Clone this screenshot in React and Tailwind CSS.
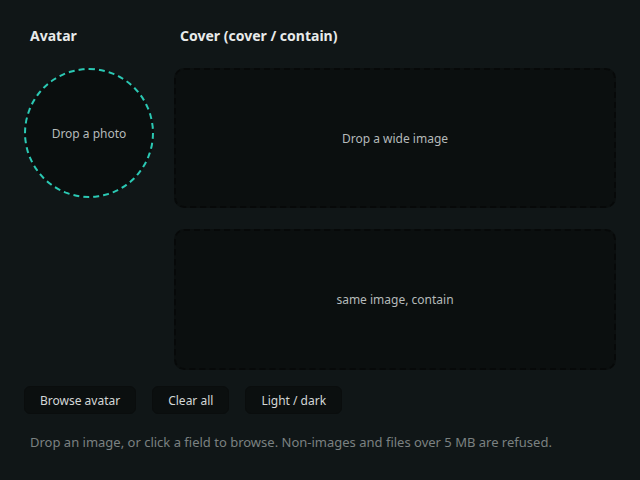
import React from "react";

const Button = ({ children }) => (
  <button className="h-7 px-[15px] pt-px rounded-md bg-[#0b0f0f] border border-[#0a0d0d] text-[12px] text-[#d3d7d7]">
    {children}
  </button>
);

const DropBox = ({ label, className }) => (
  <div
    className={`flex items-center justify-center rounded-[10px] border-2 border-dashed border-[#070909] bg-[#0b0f0f] text-[12px] text-[#b5baba] ${className}`}
  >
    {label}
  </div>
);

export default function App() {
  return (
    <div
      className="min-h-screen bg-[#101617] px-6 pt-[26px]"
      style={{ fontFamily: '"Noto Sans", "Open Sans", sans-serif' }}
    >
      <div className="flex gap-5">
        <div className="w-[130px]">
          <h2 className="pl-1.5 text-sm font-bold leading-5 text-[#e8eaea]">Avatar</h2>
          <div className="mt-[22px] w-[130px] h-[130px] pt-0.5 rounded-full border-2 border-dashed border-[#2bc9b4] bg-[#0a0e0e] flex items-center justify-center text-[12px] text-[#b5baba]">
            Drop a photo
          </div>
        </div>
        <div className="flex-1">
          <h2 className="pl-1.5 text-sm font-bold leading-5 text-[#e8eaea]">
            Cover (cover / contain)
          </h2>
          <DropBox label="Drop a wide image" className="mt-[22px] h-[140px] pt-0.5" />
          <DropBox label="same image, contain" className="mt-[21px] h-[141px]" />
        </div>
      </div>

      <div className="mt-4 flex gap-4">
        <Button>Browse avatar</Button>
        <Button>Clear all</Button>
        <Button>Light / dark</Button>
      </div>

      <p className="mt-[18px] pl-1.5 text-[13px] leading-5 text-[#7b8181]">
        Drop an image, or click a field to browse. Non-images and files over 5 MB are refused.
      </p>
    </div>
  );
}
